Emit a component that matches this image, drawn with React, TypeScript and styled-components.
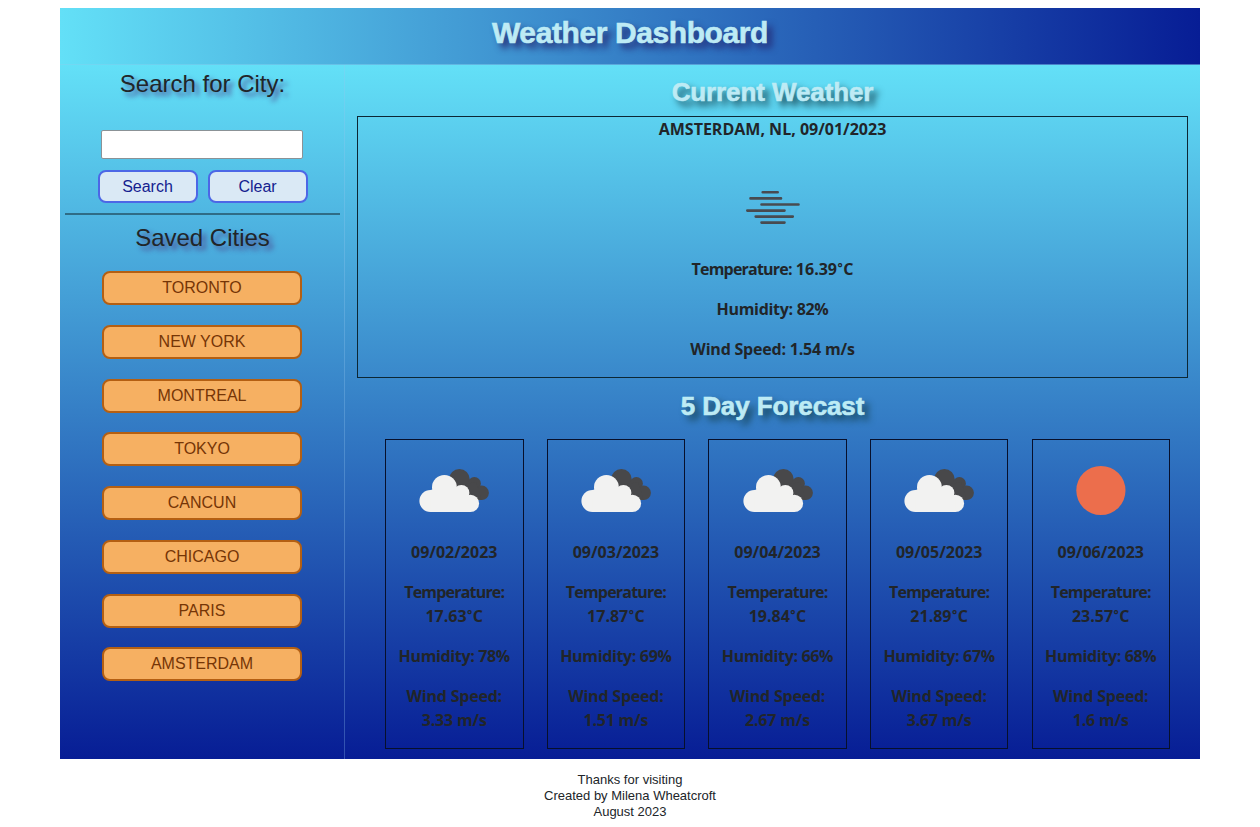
import React from "react";
import styled, { createGlobalStyle } from "styled-components";

const GlobalStyle = createGlobalStyle`
  *, *::before, *::after { box-sizing: border-box; }
  body {
    margin: 0;
    background: #fff;
    color: #212529;
    font-family: "Liberation Sans", Arial, sans-serif;
    font-size: 16px;
    line-height: 24px;
  }
  h1, h2, p { margin: 0; }
`;

const Page = styled.div`
  width: 1140px;
  margin: 0 auto;
  padding-top: 8px;
`;

const Header = styled.header`
  height: 57px;
  padding-top: 6px;
  text-align: center;
  background: linear-gradient(to right, #63e0f7, #071d95);
  border-bottom: 1px solid rgba(130, 210, 240, 0.5);
`;

const Title = styled.h1`
  font-size: 30px;
  line-height: 38px;
  letter-spacing: -0.4px;
  color: #bdebf5;
  -webkit-text-stroke: 0.6px #bdebf5;
  text-shadow: 5px 5px 7px #23236e;
`;

const Body = styled.div`
  display: flex;
  height: 694px;
  background: linear-gradient(#63e0f7, #071d95);
`;

const Sidebar = styled.aside`
  width: 285px;
  border-right: 1px solid rgba(150, 200, 240, 0.3);
  padding: 4px 4px 0 5px;
  display: flex;
  flex-direction: column;
  align-items: center;
`;

const SideHeading = styled.h2`
  font-size: 24px;
  font-weight: 400;
  line-height: 29px;
  text-shadow: 4px 4px 5px #4c4c93;
`;

const SearchInput = styled.input`
  width: 202px;
  height: 29px;
  margin: 32px 1px 11px 0;
  border: 1px solid #8b9296;
  border-radius: 2px;
  background: #fff;
`;

const ButtonRow = styled.div`
  display: flex;
  gap: 10px;
`;

const ActionButton = styled.button`
  width: 100px;
  height: 33px;
  padding: 0;
  font: 16px "Liberation Sans", Arial, sans-serif;
  color: #14218f;
  background: #dae9f5;
  border: 2px solid #4c67e6;
  border-radius: 8px;
`;

const Divider = styled.div`
  width: 275px;
  height: 2px;
  margin: 10px 0 8px;
  background: #2f6c86;
`;

const CityList = styled.div`
  display: flex;
  flex-direction: column;
  gap: 19.75px;
  margin: 19px 1px 0 0;
`;

const CityButton = styled.button`
  width: 200px;
  height: 34px;
  padding: 0;
  font: 16px "Liberation Sans", Arial, sans-serif;
  color: #753506;
  background: #f6b062;
  border: 2px solid #b45f12;
  border-radius: 8px;
`;

const Main = styled.main`
  flex: 1;
  padding: 11px 12px 0;
  font-family: "Open Sans", "Noto Sans", sans-serif;
  font-weight: 700;
  text-align: center;
`;

const SectionHeading = styled.h2`
  font: 700 26px/32px "Liberation Sans", Arial, sans-serif;
  letter-spacing: -0.1px;
  color: #bdebf5;
  -webkit-text-stroke: 0.6px #bdebf5;
  text-shadow: 5px 5px 7px #14404f;
`;

const CurrentCard = styled.section`
  height: 262px;
  margin: 8px 0 12px;
  border: 1px solid #0c2734;
  display: flex;
  flex-direction: column;
  align-items: center;
`;

const Reading = styled.p<{ $spacing?: number }>`
  margin-bottom: 16px;
  letter-spacing: ${(p) => p.$spacing ?? 0}px;
`;

const Label = styled.span`
  letter-spacing: -0.8px;
`;

const Degree = styled.span`
  font-family: Roboto, sans-serif;
  line-height: 1;
`;

const Icon = styled.svg`
  display: block;
  width: 100px;
  height: 100px;
  flex: none;
`;

const Forecast = styled.div`
  display: flex;
  justify-content: space-between;
  margin-top: 17px;
  padding: 0 18px 0 28px;
`;

const DayCard = styled.section`
  width: 138.5px;
  height: 310px;
  border: 1px solid #07102c;
  display: flex;
  flex-direction: column;
  align-items: center;
`;

const Footer = styled.footer`
  padding-top: 13px;
  font-size: 13px;
  line-height: 16px;
  text-align: center;
`;

const MistIcon = () => (
  <Icon viewBox="0 0 100 100">
    <g stroke="#484b50" strokeWidth="2.6" strokeLinecap="round">
      <path d="M39.7 35.3H54.7M27.5 41.4H58M38.5 47.5H75.5M24.3 53.6H61.5M32.7 59.6H69.8M38.5 65.6H61.5" />
    </g>
  </Icon>
);

const CloudsIcon = () => (
  <Icon viewBox="0.6 0 100 100">
    <g fill="#48484a">
      <circle cx="56" cy="39.3" r="10.3" />
      <circle cx="71" cy="43.5" r="6.5" />
      <circle cx="78.3" cy="52.8" r="7.2" />
      <path d="M52 46L73 42L78 60L60 60Z" />
    </g>
    <g fill="#f2f2f1">
      <circle cx="27" cy="61" r="11" />
      <circle cx="41" cy="47.3" r="12.4" />
      <circle cx="58" cy="53" r="8" />
      <circle cx="67" cy="63.4" r="8.7" />
      <path d="M27 50L41 47L58 50L67 57V72H27Z" />
    </g>
  </Icon>
);

const SunIcon = () => (
  <Icon viewBox="0.6 0 100 100">
    <circle cx="50.5" cy="50.5" r="24.6" fill="#ec6e4c" />
  </Icon>
);

const Celsius = ({ value }: { value: string }) => (
  <>
    {value}
    <Degree>°</Degree>C
  </>
);

const cities = ["TORONTO", "NEW YORK", "MONTREAL", "TOKYO", "CANCUN", "CHICAGO", "PARIS", "AMSTERDAM"];

const days = [
  { date: "09/02/2023", temp: "17.63", humidity: "78%", wind: "3.33 m/s" },
  { date: "09/03/2023", temp: "17.87", humidity: "69%", wind: "1.51 m/s" },
  { date: "09/04/2023", temp: "19.84", humidity: "66%", wind: "2.67 m/s" },
  { date: "09/05/2023", temp: "21.89", humidity: "67%", wind: "3.67 m/s" },
  { date: "09/06/2023", temp: "23.57", humidity: "68%", wind: "1.6 m/s", sunny: true },
];

export default function App() {
  return (
    <>
      <GlobalStyle />
      <Page>
        <Header>
          <Title>Weather Dashboard</Title>
        </Header>
        <Body>
          <Sidebar>
            <SideHeading>Search for City:</SideHeading>
            <SearchInput aria-label="City" />
            <ButtonRow>
              <ActionButton>Search</ActionButton>
              <ActionButton>Clear</ActionButton>
            </ButtonRow>
            <Divider />
            <SideHeading>Saved Cities</SideHeading>
            <CityList>
              {cities.map((city) => (
                <CityButton key={city}>{city}</CityButton>
              ))}
            </CityList>
          </Sidebar>
          <Main>
            <SectionHeading>Current Weather</SectionHeading>
            <CurrentCard>
              <Reading>AMSTERDAM, NL, 09/01/2023</Reading>
              <MistIcon />
              <Reading>
                <Label>Temperature:</Label> <Celsius value="16.39" />
              </Reading>
              <Reading $spacing={-0.3}>Humidity: 82%</Reading>
              <Reading $spacing={-0.2}>Wind Speed: 1.54 m/s</Reading>
            </CurrentCard>
            <SectionHeading>5 Day Forecast</SectionHeading>
            <Forecast>
              {days.map((day) => (
                <DayCard key={day.date}>
                  {day.sunny ? <SunIcon /> : <CloudsIcon />}
                  <Reading>{day.date}</Reading>
                  <Reading>
                    <Label>Temperature:</Label>
                    <br />
                    <Celsius value={day.temp} />
                  </Reading>
                  <Reading $spacing={-0.35}>Humidity: {day.humidity}</Reading>
                  <Reading $spacing={-0.2}>
                    Wind Speed:
                    <br />
                    {day.wind}
                  </Reading>
                </DayCard>
              ))}
            </Forecast>
          </Main>
        </Body>
        <Footer>
          <p>Thanks for visiting</p>
          <p>Created by Milena Wheatcroft</p>
          <p>August 2023</p>
        </Footer>
      </Page>
    </>
  );
}
